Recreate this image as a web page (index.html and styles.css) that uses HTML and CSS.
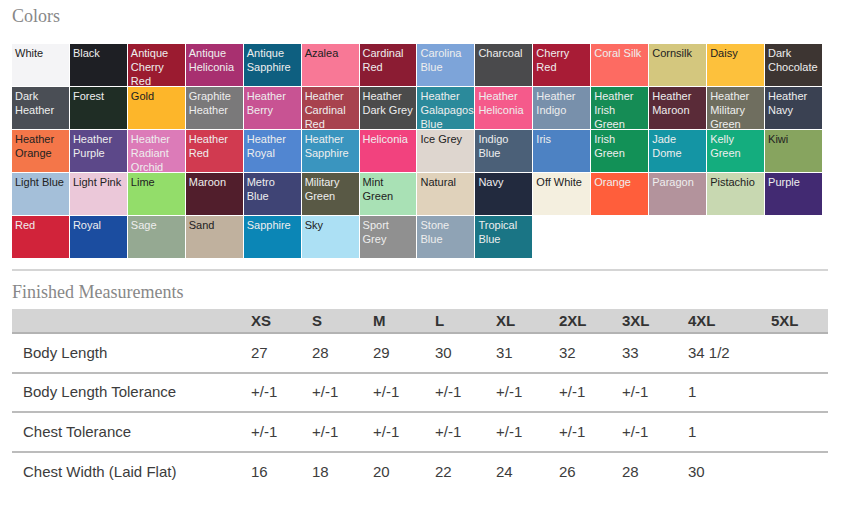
FILE: index.html
```html
<!DOCTYPE html>
<html>
<head>
<meta charset="utf-8">
<link rel="stylesheet" href="styles.css">
</head>
<body>
<div class="page">
  <h2 class="title title-colors">Colors</h2>
  <div class="swatches">
    <div class="sw dk" style="background:#f4f4f6">White</div>
    <div class="sw" style="background:#1e1f24">Black</div>
    <div class="sw" style="background:#9b1b30">Antique Cherry Red</div>
    <div class="sw" style="background:#a83070">Antique Heliconia</div>
    <div class="sw" style="background:#0e5f80">Antique Sapphire</div>
    <div class="sw dk" style="background:#f87896">Azalea</div>
    <div class="sw" style="background:#8b1c33">Cardinal Red</div>
    <div class="sw" style="background:#7da4d9">Carolina Blue</div>
    <div class="sw" style="background:#4a4a4c">Charcoal</div>
    <div class="sw" style="background:#a81c36">Cherry Red</div>
    <div class="sw" style="background:#fd6b62">Coral Silk</div>
    <div class="sw dk" style="background:#d4c77e">Cornsilk</div>
    <div class="sw dk" style="background:#fdc13c">Daisy</div>
    <div class="sw" style="background:#3d3532">Dark Chocolate</div>

    <div class="sw" style="background:#4a4e55">Dark Heather</div>
    <div class="sw" style="background:#1f2d25">Forest</div>
    <div class="sw dk" style="background:#fdb62a">Gold</div>
    <div class="sw" style="background:#7a797a">Graphite Heather</div>
    <div class="sw" style="background:#c85393">Heather Berry</div>
    <div class="sw" style="background:#a8424e">Heather Cardinal Red</div>
    <div class="sw" style="background:#4b4b4b">Heather Dark Grey</div>
    <div class="sw" style="background:#2b8a9b">Heather Galapagos Blue</div>
    <div class="sw" style="background:#f55a8b">Heather Heliconia</div>
    <div class="sw" style="background:#7890ab">Heather Indigo</div>
    <div class="sw" style="background:#158c55">Heather Irish Green</div>
    <div class="sw" style="background:#5a2b38">Heather Maroon</div>
    <div class="sw" style="background:#6f6e5f">Heather Military Green</div>
    <div class="sw" style="background:#3a4152">Heather Navy</div>

    <div class="sw dk" style="background:#f47649">Heather Orange</div>
    <div class="sw" style="background:#5c4889">Heather Purple</div>
    <div class="sw" style="background:#dc7bb8">Heather Radiant Orchid</div>
    <div class="sw" style="background:#d13a50">Heather Red</div>
    <div class="sw" style="background:#5186d1">Heather Royal</div>
    <div class="sw" style="background:#3a95bf">Heather Sapphire</div>
    <div class="sw" style="background:#f2427e">Heliconia</div>
    <div class="sw dk" style="background:#ded6cf">Ice Grey</div>
    <div class="sw" style="background:#4b6078">Indigo Blue</div>
    <div class="sw" style="background:#4d82c3">Iris</div>
    <div class="sw" style="background:#129157">Irish Green</div>
    <div class="sw" style="background:#1495a4">Jade Dome</div>
    <div class="sw" style="background:#14ad7e">Kelly Green</div>
    <div class="sw dk" style="background:#87a45f">Kiwi</div>

    <div class="sw dk" style="background:#a4bfd9">Light Blue</div>
    <div class="sw dk" style="background:#ebc8d9">Light Pink</div>
    <div class="sw dk" style="background:#93dd6a">Lime</div>
    <div class="sw" style="background:#511e2c">Maroon</div>
    <div class="sw" style="background:#3f4475">Metro Blue</div>
    <div class="sw" style="background:#595945">Military Green</div>
    <div class="sw dk" style="background:#a9e1b5">Mint Green</div>
    <div class="sw dk" style="background:#e0d2bb">Natural</div>
    <div class="sw" style="background:#222a3e">Navy</div>
    <div class="sw dk" style="background:#f4efdf">Off White</div>
    <div class="sw" style="background:#ff5e3b">Orange</div>
    <div class="sw" style="background:#b3939c">Paragon</div>
    <div class="sw dk" style="background:#c8d8b1">Pistachio</div>
    <div class="sw" style="background:#422a72">Purple</div>

    <div class="sw" style="background:#d1233a">Red</div>
    <div class="sw" style="background:#1b4da0">Royal</div>
    <div class="sw" style="background:#95a992">Sage</div>
    <div class="sw dk" style="background:#c0b19e">Sand</div>
    <div class="sw" style="background:#0b86b6">Sapphire</div>
    <div class="sw dk" style="background:#ace0f4">Sky</div>
    <div class="sw" style="background:#909090">Sport Grey</div>
    <div class="sw" style="background:#8fa3b5">Stone Blue</div>
    <div class="sw" style="background:#1a7585">Tropical Blue</div>
  </div>

  <hr class="divider">

  <h2 class="title title-measure">Finished Measurements</h2>
  <table class="sizes">
    <colgroup>
      <col class="c-label"><col class="c-xs"><col class="c-s"><col class="c-m"><col class="c-l"><col class="c-xl"><col class="c-2xl"><col class="c-3xl"><col class="c-4xl"><col class="c-5xl">
    </colgroup>
    <thead>
      <tr><th></th><th>XS</th><th>S</th><th>M</th><th>L</th><th>XL</th><th>2XL</th><th>3XL</th><th>4XL</th><th>5XL</th></tr>
    </thead>
    <tbody>
      <tr><td>Body Length</td><td>27</td><td>28</td><td>29</td><td>30</td><td>31</td><td>32</td><td>33</td><td>34 1/2</td><td></td></tr>
      <tr><td>Body Length Tolerance</td><td>+/-1</td><td>+/-1</td><td>+/-1</td><td>+/-1</td><td>+/-1</td><td>+/-1</td><td>+/-1</td><td>1</td><td></td></tr>
      <tr><td>Chest Tolerance</td><td>+/-1</td><td>+/-1</td><td>+/-1</td><td>+/-1</td><td>+/-1</td><td>+/-1</td><td>+/-1</td><td>1</td><td></td></tr>
      <tr><td>Chest Width (Laid Flat)</td><td>16</td><td>18</td><td>20</td><td>22</td><td>24</td><td>26</td><td>28</td><td>30</td><td></td></tr>
    </tbody>
  </table>
</div>
</body>
</html>
```

FILE: styles.css
```css
* { box-sizing: border-box; }
html, body { margin: 0; padding: 0; background: #fff; }
body { font-family: "Liberation Sans", Arial, sans-serif; }

.page {
  padding: 0 40px 0 12px;
  width: 868px;
}

.title {
  font-family: "Liberation Serif", "Times New Roman", serif;
  font-weight: normal;
  font-size: 18px;
  line-height: 24px;
  color: #888;
  margin: 0;
}
.title-colors { margin-top: 4px; margin-bottom: 16px; }
.title-measure { margin-top: 9px; margin-bottom: 5px; }

.swatches {
  width: 810px;
  display: grid;
  grid-template-columns: repeat(14, 1fr);
  grid-auto-rows: 42px;
  gap: 1px;
}
.sw {
  font-size: 11px;
  line-height: 14px;
  padding: 2px 2px 0 3px;
  color: #eeeeee;
  overflow: hidden;
}
.sw.dk { color: #222; }

.divider {
  border: 0;
  height: 2px;
  background: #d5d5d5;
  margin: 11px 0 0 0;
  width: 816px;
}

.sizes {
  width: 816px;
  table-layout: fixed;
  border-collapse: collapse;
  font-size: 15px;
  color: #3c3c3c;
}
.c-label { width: 228px; }
.c-xs { width: 61px; }
.c-s { width: 61px; }
.c-m { width: 62px; }
.c-l { width: 61px; }
.c-xl { width: 63px; }
.c-2xl { width: 63px; }
.c-3xl { width: 66px; }
.c-4xl { width: 83px; }
.c-5xl { width: 68px; }

.sizes th {
  background: #d4d4d4;
  border-bottom: 2px solid #b3b3b3;
  height: 24px;
  padding: 0 0 0 11px;
  text-align: left;
  font-weight: bold;
  color: #333;
  line-height: 18px;
  vertical-align: middle;
}
.sizes td {
  height: 39.6px;
  padding: 0 0 0 11px;
  line-height: 18px;
  border-bottom: 2px solid #bcbcbc;
  vertical-align: middle;
  white-space: nowrap;
}
.sizes tbody tr:last-child td { border-bottom: 0; }
```
